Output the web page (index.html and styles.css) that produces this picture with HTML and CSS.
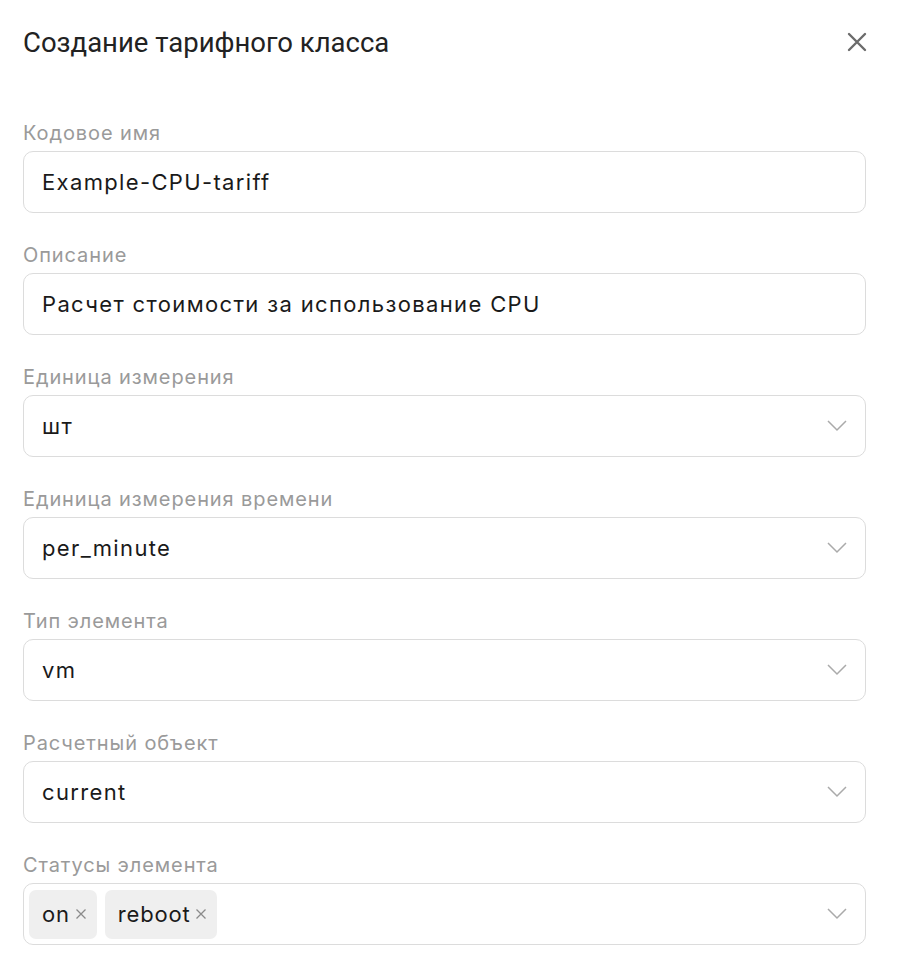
FILE: index.html
```html
<!DOCTYPE html>
<html lang="ru">
<head>
<meta charset="utf-8">
<link rel="stylesheet" href="styles.css">
</head>
<body>
<div class="modal">
  <div class="header">
    <h1 class="title">Создание тарифного класса</h1>
    <button class="close" aria-label="Закрыть">
      <svg width="20" height="20" viewBox="0 0 20 20"><path d="M2 2L18 18M18 2L2 18" stroke="#6b6b6b" stroke-width="2.4" stroke-linecap="round"/></svg>
    </button>
  </div>
  <form class="form">
    <div class="field">
      <label class="label">Кодовое имя</label>
      <div class="box"><span class="value">Example-CPU-tariff</span></div>
    </div>
    <div class="field">
      <label class="label">Описание</label>
      <div class="box"><span class="value">Расчет стоимости за использование CPU</span></div>
    </div>
    <div class="field">
      <label class="label">Единица измерения</label>
      <div class="box select"><span class="value">шт</span><svg class="chev" width="20" height="12" viewBox="0 0 20 12"><path d="M1 1L10 10L19 1" fill="none" stroke="#aaa" stroke-width="1.5"/></svg></div>
    </div>
    <div class="field">
      <label class="label">Единица измерения времени</label>
      <div class="box select"><span class="value">per_minute</span><svg class="chev" width="20" height="12" viewBox="0 0 20 12"><path d="M1 1L10 10L19 1" fill="none" stroke="#aaa" stroke-width="1.5"/></svg></div>
    </div>
    <div class="field">
      <label class="label">Тип элемента</label>
      <div class="box select"><span class="value">vm</span><svg class="chev" width="20" height="12" viewBox="0 0 20 12"><path d="M1 1L10 10L19 1" fill="none" stroke="#aaa" stroke-width="1.5"/></svg></div>
    </div>
    <div class="field">
      <label class="label">Расчетный объект</label>
      <div class="box select"><span class="value">current</span><svg class="chev" width="20" height="12" viewBox="0 0 20 12"><path d="M1 1L10 10L19 1" fill="none" stroke="#aaa" stroke-width="1.5"/></svg></div>
    </div>
    <div class="field">
      <label class="label">Статусы элемента</label>
      <div class="box select multi">
        <div class="chips">
          <span class="chip">on<svg class="chip-x" width="12" height="12" viewBox="0 0 12 12"><path d="M1.5 1.5L10.5 10.5M10.5 1.5L1.5 10.5" stroke="#8a8a8a" stroke-width="1.3"/></svg></span>
          <span class="chip">reboot<svg class="chip-x" width="12" height="12" viewBox="0 0 12 12"><path d="M1.5 1.5L10.5 10.5M10.5 1.5L1.5 10.5" stroke="#8a8a8a" stroke-width="1.3"/></svg></span>
        </div>
        <svg class="chev" width="20" height="12" viewBox="0 0 20 12"><path d="M1 1L10 10L19 1" fill="none" stroke="#aaa" stroke-width="1.5"/></svg>
      </div>
    </div>
  </form>
</div>
</body>
</html>
```
FILE: styles.css
```css
* { box-sizing: border-box; }
html, body { margin: 0; padding: 0; background: #fff; }
body { font-family: "Inter", "Noto Sans", sans-serif; color: #1a1a1a; }
.modal { width: 900px; padding: 23px 34px 0 23px; }
.header { display: flex; align-items: center; justify-content: space-between; height: 38px; }
.title { margin: 0; font-family: "Roboto", sans-serif; font-weight: 400; font-size: 27.5px; color: #222; letter-spacing: 0; }
.close { border: 0; background: none; padding: 0; margin-right: -1px; display: flex; cursor: pointer; }
.form { display: flex; flex-direction: column; gap: 30px; margin-top: 60px; }
.field { display: flex; flex-direction: column; gap: 6px; }
.label { font-size: 20px; color: #9a9a9a; line-height: 24px; letter-spacing: 0.9px; }
.box { height: 62px; border: 1px solid #dcdcdc; border-radius: 10px; display: flex; align-items: center; padding: 0 18px; }
.value { font-size: 22px; color: #1a1a1a; letter-spacing: 1.35px; }
.select { justify-content: space-between; }
.multi { padding-left: 5px; }
.chips { display: flex; gap: 8px; }
.chip { display: flex; align-items: center; gap: 5px; height: 49px; padding: 0 10px 0 13px; background: #efefef; border-radius: 7px; font-size: 22px; color: #1a1a1a; letter-spacing: 0.8px; }
```
